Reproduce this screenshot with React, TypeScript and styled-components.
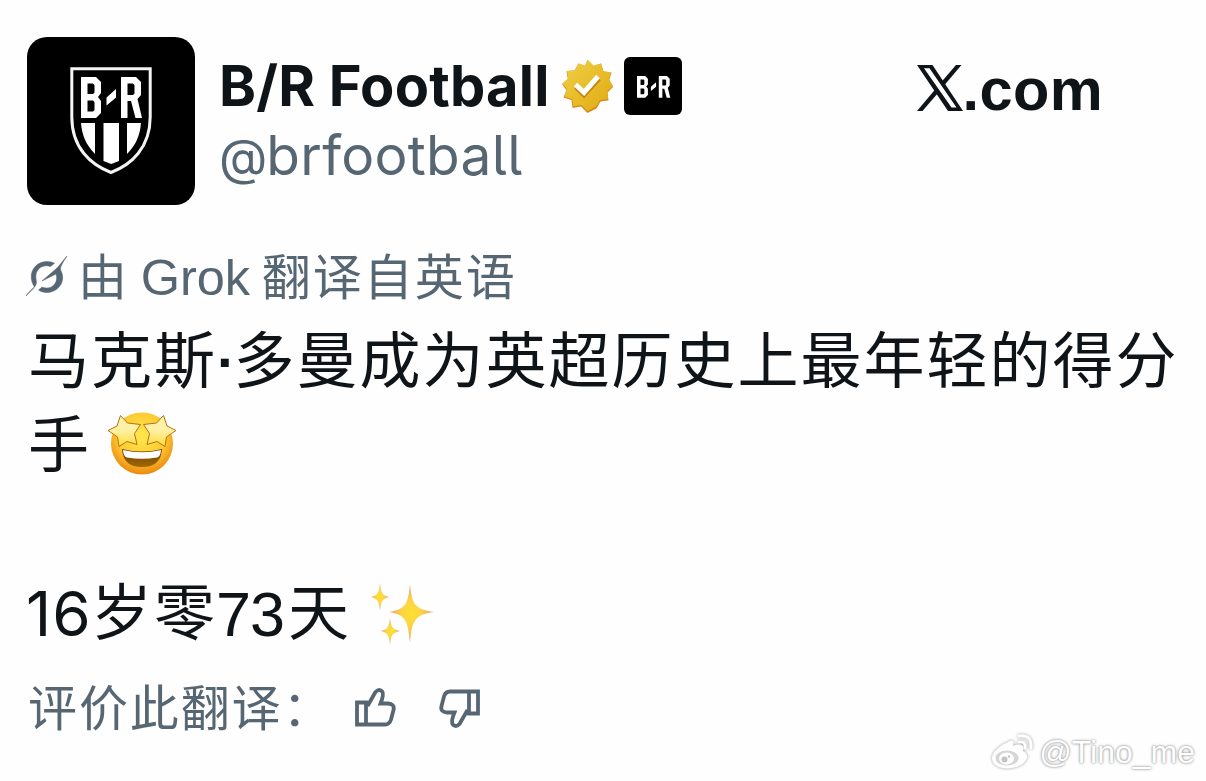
import styled, { createGlobalStyle } from "styled-components";

const App = () => {
  return (
    <>
      <GlobalStyle />
      <Page>
        <Header>
          <Avatar>
            <ShieldLogo />
          </Avatar>
          <Names>
            <NameRow>
              <Name>B/R Football</Name>
              <VerifiedBadge />
              <Affiliate>
                <AffiliateLogo />
              </Affiliate>
            </NameRow>
            <Handle>
              <At>@</At>brfootball
            </Handle>
          </Names>
          <Site>
            <XLogo />
            <SiteText>.com</SiteText>
          </Site>
        </Header>
        <Translated>
          <GrokIcon />
          <TranslatedText>
            由 <Grok>Grok</Grok> 翻译自英语
          </TranslatedText>
        </Translated>
        <Post>
          <Line>
            <span>马克斯</span>
            <Dot>·</Dot>
            <span>多曼成为英超历史上最年轻的得分</span>
          </Line>
          <Line>
            <span>手</span>
            <StarEyes />
          </Line>
          <Line />
          <Line>
            <Age>16</Age>
            <span>岁零</span>
            <Days>73</Days>
            <span>天</span>
            <Sparkles />
          </Line>
        </Post>
        <Rate>
          <RateText>评价此翻译：</RateText>
          <ThumbUp />
          <ThumbDown />
        </Rate>
        <Watermark>
          <WeiboIcon />
          <span>@Tino_me</span>
        </Watermark>
      </Page>
    </>
  );
};

const GlobalStyle = createGlobalStyle`
  body {
    margin: 0;
    background: #fff;
  }
  svg {
    display: block;
    flex: none;
  }
`;

const Page = styled.div`
  box-sizing: border-box;
  position: relative;
  width: 1206px;
  height: 781px;
  padding: 37px 27px 0;
  overflow: hidden;
  background: #fefefe;
  color: #0f1419;
  font-family: "Liberation Sans", "Noto Sans CJK SC", sans-serif;
`;

const Header = styled.div`
  display: flex;
  height: 168px;
`;

const Avatar = styled.div`
  width: 168px;
  height: 168px;
  border-radius: 20px;
  background: #000;
`;

const Names = styled.div`
  display: flex;
  flex-direction: column;
  margin-left: 24px;
  font-family: Inter, sans-serif;
`;

const NameRow = styled.div`
  display: flex;
  align-items: center;
  height: 98px;
`;

const Name = styled.div`
  width: 341px;
  font-size: 56px;
  font-weight: 700;
  line-height: 98px;
  letter-spacing: 0.2px;
  white-space: nowrap;
`;

const Affiliate = styled.div`
  width: 58px;
  height: 58px;
  margin-left: 10px;
  border-radius: 6px;
  background: #000;
`;

const Handle = styled.div`
  color: #566673;
  font-size: 55px;
  line-height: 66px;
  margin-top: -13px;
  letter-spacing: 0.3px;
  font-feature-settings: "cv05";
`;

const At = styled.span`
  font-size: 50px;
  letter-spacing: -1px;
`;

const Site = styled.div`
  display: flex;
  align-items: flex-start;
  margin-left: auto;
  margin-right: 76px;
  padding-top: 28px;
`;

const SiteText = styled.div`
  font-size: 59.5px;
  font-weight: 700;
  line-height: 50px;
  letter-spacing: 0.4px;
`;

const Translated = styled.div`
  display: flex;
  align-items: center;
  height: 76px;
  margin-top: 35px;
  color: #566673;
`;

const TranslatedText = styled.div`
  margin-left: 10px;
  font-size: 49px;
  line-height: 76px;
  letter-spacing: 2px;
  word-spacing: -4px;
  white-space: nowrap;
`;

const Grok = styled.span`
  font-size: 50.5px;
  letter-spacing: 0;
`;

const Post = styled.div`
  padding: 4px 0 0 1px;
  font-size: 61px;
  letter-spacing: 2px;
`;

const Line = styled.div`
  display: flex;
  align-items: center;
  height: 84px;
  line-height: 84px;
  white-space: nowrap;
`;

const Dot = styled.span`
  width: 16.5px;
  font-size: 56px;
  font-weight: 700;
  letter-spacing: 0;
  text-align: center;
`;

const Digits = styled.span`
  font-size: 63px;
`;

const Age = styled(Digits)`
  width: 65px;
  margin-left: -2px;
  font-family: Inter, sans-serif;
  font-size: 62px;
  letter-spacing: 1px;
`;

const Days = styled(Digits)`
  width: 73px;
  margin-left: -1px;
  margin-right: -1px;
  letter-spacing: -1px;
`;

const Rate = styled.div`
  display: flex;
  align-items: center;
  height: 76px;
  margin-top: 14px;
  color: #566673;
`;

const RateText = styled.div`
  width: 327px;
  margin-left: 1px;
  padding-top: 2px;
  box-sizing: border-box;
  font-size: 49px;
  line-height: 76px;
  letter-spacing: 1.9px;
  white-space: nowrap;
`;

const Watermark = styled.div`
  position: absolute;
  right: 11px;
  bottom: 8px;
  display: flex;
  align-items: center;
  color: #fff;
  font-size: 32px;
  line-height: 42px;
  text-shadow: 0 0 3px rgba(0, 0, 0, 0.45), 0 0 2px rgba(0, 0, 0, 0.2);

  span {
    margin-left: 4px;
  }
`;

const BRLetters = () => (
  <g>
    <path
      fillRule="evenodd"
      d="M0 0H15L20 5V16L17 20L20 24V36L15 41H0ZM6.5 6.5V17H12L13.5 15.500V8L12 6.5ZM6.5 23.5V34.5H12L13.5 33V25L12 23.5Z"
    />
    <path d="M25.5 20.5L35 12V20.5L25.5 28.5Z" />
    <path
      fillRule="evenodd"
      d="M40 0H55L60 5V18L56.5 22L61 41H54.5L50 24H46.5V41H40ZM46.5 6.5V18H52L53.5 16.5V8L52 6.5Z"
    />
  </g>
);

const ShieldLogo = () => (
  <svg width="168" height="168" viewBox="0 0 168 168" fill="#fff">
    <path
      d="M44.8 31.8H123.2V80C123.2 111 104 128 84 135.5C64 128 44.8 111 44.8 80Z"
      fill="none"
      stroke="#f4f4f4"
      strokeWidth="3"
    />
    <g transform="translate(54 40)">
      <BRLetters />
    </g>
    <path d="M54 86H68V117C59 108 55 98 54 86Z" />
    <path d="M76.5 86H92V124L84.25 127L76.5 124Z" />
    <path d="M100 86H114C113 98 109 108 100 117Z" />
  </svg>
);

const AffiliateLogo = () => (
  <svg width="58" height="58" viewBox="0 0 58 58" fill="#fff">
    <g transform="translate(13 19) scale(.545 .53)">
      <BRLetters />
    </g>
  </svg>
);

const VerifiedBadge = () => (
  <svg width="54" height="56" viewBox="0 0 54 56">
    <defs>
      <linearGradient id="gold" x1="0" y1="0" x2="1" y2="1">
        <stop offset="0" stopColor="#f1d04a" />
        <stop offset="0.5" stopColor="#e8bd29" />
        <stop offset="1" stopColor="#e0a916" />
      </linearGradient>
    </defs>
    <path
      d="M27.5 2L33.5 8.2L41 5.5L43.5 13.5L51.5 14.5L49.3 22L53 29L47.5 34.5L48.5 42.5L40.5 43.5L36.5 50.5L27.5 55L21 48.5L12.5 50L11.5 42L3.5 39.5L6.5 32L2 26L7.8 21L6.5 13L14.5 12.5L18.5 5.5L25 8Z"
      fill="#d48c1c"
    />
    <path
      d="M27.5 1.5L33.5 7.5L41 5.5L43 13L51 14.5L49 21.5L53 28L47.5 33L48 41L40 42L36 48.5L27.5 53L21 47L13.5 48.5L12 41L4.5 38.5L7 31L2.5 25.5L8.2 20.5L7 13L14.8 12.2L19 5.5L25 7.5Z"
      fill="url(#gold)"
    />
    <path d="M16 29L24 37L39 20.5" fill="none" stroke="#c98512" strokeWidth="5" />
    <path d="M15.5 26.5L24 34.5L38 18.5" fill="none" stroke="#fff" strokeWidth="5" />
  </svg>
);

const XLogo = () => (
  <XSvg width="47" height="46" viewBox="0 0 47 46">
    <path
      fillRule="evenodd"
      d="M0 0H15.5L46 46H31ZM7 3.2L34.5 42.5H39.5L12.5 3.2Z"
    />
    <path d="M39 0H44.5L27.5 20L24.8 16.5Z" />
    <path d="M0 46H5.5L21 28L18.3 24.3Z" />
  </XSvg>
);

const XSvg = styled.svg`
  margin-right: -1px;
  fill: #0f1419;
`;

const GrokIcon = () => (
  <GrokSvg width="42" height="44" viewBox="0 0 42 44">
    <path d="M8.5 32C1 21 7 7.5 20 6.5C23 6.2 26 7 28.5 8.2L24.5 11.5C16 8.5 8.5 15 10 24C10.5 27 11 28 9 31.5C7 34 3 38 -1 42C2 38 6 34 8.5 32Z" />
    <path d="M16 26L31 13C34 10 36.5 6 41 1C38 6 34 11 34.5 15C41 26 32 38 20 37.5C17 37.3 14.5 36.5 12.5 35L16 32C25 36 33 28 30 19Z" />
  </GrokSvg>
);

const GrokSvg = styled.svg`
  margin-left: -1px;
  margin-bottom: 2px;
  fill: #566673;
  stroke: #566673;
  stroke-width: 0.5px;
`;

const StarEyes = () => (
  <StarEyesSvg width="70" height="66" viewBox="0 0 70 66">
    <defs>
      <radialGradient id="face" cx=".5" cy=".38" r=".62">
        <stop offset="0" stopColor="#ffe84e" />
        <stop offset=".6" stopColor="#fdcb33" />
        <stop offset="1" stopColor="#ec880f" />
      </radialGradient>
      <linearGradient id="star" x1="0" y1="0" x2="0" y2="1">
        <stop offset="0" stopColor="#fff3b4" />
        <stop offset=".5" stopColor="#fff0a0" />
        <stop offset="1" stopColor="#ffdc38" />
      </linearGradient>
      <linearGradient id="mouth" x1="0" y1="0" x2="0" y2="1">
        <stop offset="0" stopColor="#6d3d04" />
        <stop offset="1" stopColor="#a06a05" />
      </linearGradient>
    </defs>
    <circle cx="35" cy="33.5" r="31" fill="url(#face)" />
    <path d="M15 39Q35 44 55 39Q54 57 35 57Q16 57 15 39Z" fill="url(#mouth)" />
    <path d="M16 40Q35 44.5 54 40Q53.5 47 50 47.5Q35 50 20 47.5Q16.5 47 16 40Z" fill="#fff" />
    <g fill="url(#star)" stroke="#b8700f" strokeWidth="1" strokeLinejoin="round">
      <path d="M13.5 5.5L20.5 13L33.5 14.5L27.5 23.5L30 34.5L20 31.5L12 36.5L10.5 27L1 20.5L10 16Z" />
      <path d="M56.5 5.5L49.5 13L36.5 14.5L42.5 23.5L40 34.5L50 31.5L58 36.5L59.5 27L69 20.5L60 16Z" />
    </g>
  </StarEyesSvg>
);

const StarEyesSvg = styled.svg`
  margin-left: 16px;
  margin-bottom: 6px;
`;

const Sparkles = () => (
  <SparklesSvg width="66" height="64" viewBox="0 0 66 64">
    <defs>
      <radialGradient id="glow">
        <stop offset="0" stopColor="#ffe02f" />
        <stop offset=".45" stopColor="#fbd447" />
        <stop offset="1" stopColor="#ec9f66" />
      </radialGradient>
    </defs>
    <g fill="url(#glow)">
      <path d="M41 2C43 22 45 27 65 30C45 33 43 39 41 61C39 39 37 33 20 30C37 27 39 22 41 2Z" />
      <path d="M11 1C12 11 13 13 20 15C13 17 12 19 11 29C10 19 9 17 2 15C9 13 10 11 11 1Z" />
      <path d="M21 36C22 45 23 47 31 49C23 51 22 53 21 63C20 53 19 51 12 49C19 47 20 45 21 36Z" />
    </g>
  </SparklesSvg>
);

const SparklesSvg = styled.svg`
  margin-left: 18px;
`;

const thumb = "M12.5 18L20.5 4Q24.5 0 27.5 4Q29 7 25.5 15.5H33Q40 16 38.5 22L36 31.5Q34.5 36.5 30 36.5H2V14.5H11V36.5";

const ThumbUp = () => (
  <ThumbUpSvg width="42" height="40" viewBox="0 0 42 40">
    <path d={thumb} />
  </ThumbUpSvg>
);

const ThumbDown = () => (
  <ThumbDownSvg width="42" height="40" viewBox="0 0 42 40">
    <path d={thumb} />
  </ThumbDownSvg>
);

const ThumbUpSvg = styled.svg`
  fill: none;
  stroke: #566673;
  stroke-width: 3.8px;
`;

const ThumbDownSvg = styled(ThumbUpSvg)`
  margin-left: 41px;
  transform: rotate(180deg);
`;

const WeiboIcon = () => (
  <WeiboSvg width="44" height="38" viewBox="0 0 44 38">
    <path
      d="M16 10C23 5 25 8 23 13C31 10 35 12 33 18C40 21 38 29 29 33C17 38 2 35 2 25C2 20 9 13 16 10Z"
      fill="#fff"
    />
    <ellipse cx="17" cy="25" rx="11.5" ry="7.5" fill="#d5d5d5" />
    <ellipse cx="16.5" cy="25.5" rx="7.5" ry="6" fill="#fff" />
    <circle cx="14.5" cy="26.5" r="3" fill="#c4c4c4" />
    <circle cx="19" cy="23.5" r="1.2" fill="#c4c4c4" />
    <path
      d="M29 3Q42 1 41 15M29 9Q36 8 35 15"
      fill="none"
      stroke="#fff"
      strokeWidth="3"
      strokeLinecap="round"
    />
  </WeiboSvg>
);

const WeiboSvg = styled.svg`
  margin-right: 1px;
  filter: drop-shadow(0 0 1.5px rgba(0, 0, 0, 0.4));
`;

export default App;
